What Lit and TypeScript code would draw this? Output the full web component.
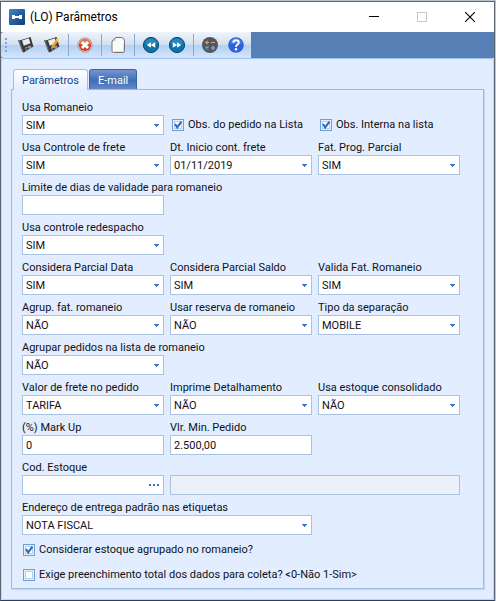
import { LitElement, html, css, svg, nothing, TemplateResult } from "lit";
import { customElement, state } from "lit/decorators.js";

type Field = {
  kind: "select" | "date" | "text" | "lookup" | "readonly" | "check";
  id: string;
  label?: string;
  value?: string;
  checked?: boolean;
  span?: number;
};

const ROWS: Field[][] = [
  [
    { kind: "select", id: "romaneio", label: "Usa Romaneio", value: "SIM" },
    { kind: "check", id: "obs-lista", label: "Obs. do pedido na Lista", checked: true },
    { kind: "check", id: "obs-interna", label: "Obs. Interna na lista", checked: true },
  ],
  [
    { kind: "select", id: "frete", label: "Usa Controle de frete", value: "SIM" },
    { kind: "date", id: "inicio", label: "Dt. Inicio cont. frete", value: "01/11/2019" },
    { kind: "select", id: "prog", label: "Fat. Prog. Parcial", value: "SIM" },
  ],
  [{ kind: "text", id: "limite", label: "Limite de dias de validade para romaneio", value: "" }],
  [{ kind: "select", id: "redespacho", label: "Usa controle redespacho", value: "SIM" }],
  [
    { kind: "select", id: "parcial-data", label: "Considera Parcial Data", value: "SIM" },
    { kind: "select", id: "parcial-saldo", label: "Considera Parcial Saldo", value: "SIM" },
    { kind: "select", id: "valida", label: "Valida Fat. Romaneio", value: "SIM" },
  ],
  [
    { kind: "select", id: "agrup", label: "Agrup. fat. romaneio", value: "NÃO" },
    { kind: "select", id: "reserva", label: "Usar reserva de romaneio", value: "NÃO" },
    { kind: "select", id: "separacao", label: "Tipo da separação", value: "MOBILE" },
  ],
  [{ kind: "select", id: "agrupar", label: "Agrupar pedidos na lista de romaneio", value: "NÃO" }],
  [
    { kind: "select", id: "valor", label: "Valor de frete no pedido", value: "TARIFA" },
    { kind: "select", id: "imprime", label: "Imprime Detalhamento", value: "NÃO" },
    { kind: "select", id: "consolidado", label: "Usa estoque consolidado", value: "NÃO" },
  ],
  [
    { kind: "text", id: "markup", label: "(%) Mark Up", value: "0" },
    { kind: "text", id: "minimo", label: "Vlr. Min. Pedido", value: "2.500,00" },
  ],
  [
    { kind: "lookup", id: "estoque", label: "Cod. Estoque", value: "" },
    { kind: "readonly", id: "estoque-nome", value: "", span: 2 },
  ],
  [{ kind: "select", id: "endereco", label: "Endereço de entrega padrão nas etiquetas", value: "NOTA FISCAL", span: 2 }],
];

const floppy = svg`
  <path d="M1 4 L2.6 4.6 L13.6 1 L16.4 10.6 L6.6 16.4 L5.4 15.6 Z" fill="#3a3a3c"/>
  <path d="M1 4 L2.6 4.6 L6.6 16.4 L5.4 15.6 Z" fill="#6f6f72"/>
  <path d="M5 4.4 L11.8 2.2 L13.4 7.2 L6.8 9.8 Z" fill="#e9ebed"/>
  <path d="M8 11.8 L13.6 9.2 L14.6 11.4 L9.2 14.4 Z" fill="#929496"/>
  <path d="M9.2 12.2 L10.8 11.5 L11.7 13 L10.2 13.8 Z" fill="#2b2b2d"/>`;

const ICONS: Record<string, TemplateResult> = {
  save: svg`${floppy}`,
  saveEdit: svg`${floppy}
    <path d="M13.8 2.6 L16 4 L10.6 11.4 L8.4 12.8 L8.6 10 Z" fill="#f2a024"/>
    <path d="M13.8 2.6 L16 4 L15.2 5.2 L13 3.8 Z" fill="#f9cf86"/>`,
  cancel: svg`
    <circle cx="9" cy="9" r="7.2" fill="#d6cfce" stroke="#9b9496" stroke-width=".8"/>
    <circle cx="9" cy="9" r="6.1" fill="#d83a1c"/>
    <path d="M3.2 8 A5.9 5.9 0 0 1 14.8 8 Q9 10 3.2 8" fill="#f08a6c" opacity=".7"/>
    <path d="M5.9 6 L12.1 12 M12.1 6 L5.9 12" stroke="#fff" stroke-width="3"/>`,
  page: svg`
    <path d="M6.5 1.5 H12 Q15.5 1.5 15.5 5 V15 Q15.5 16.5 14 16.5 H4.5 Q3 16.5 3 15 V5 Z" fill="#fbfbfb" stroke="#76787a"/>
    <path d="M3.5 5.5 Q6.5 5.5 6.8 2" fill="none" stroke="#b3b5b7"/>
    <path d="M5 15.5 H14.5 V8" fill="none" stroke="#d9dbdd"/>`,
  prev: svg`
    <circle cx="9" cy="9" r="7.6" fill="#0b74ac" stroke="#0b4566"/>
    <path d="M2.8 7.5 A6.4 6.4 0 0 1 15.2 7.5 Q9 9.5 2.8 7.5" fill="#3a9acb" opacity=".6"/>
    <path d="M9 6.2 V11.8 L4.8 9 Z M13.2 6.2 V11.8 L8.8 9 Z" fill="#fff"/>`,
  next: svg`
    <circle cx="9" cy="9" r="7.6" fill="#0b74ac" stroke="#0b4566"/>
    <path d="M2.8 7.5 A6.4 6.4 0 0 1 15.2 7.5 Q9 9.5 2.8 7.5" fill="#3a9acb" opacity=".6"/>
    <path d="M4.8 6.2 V11.8 L9.2 9 Z M9 6.2 V11.8 L13.2 9 Z" fill="#fff"/>`,
  calc: svg`
    <circle cx="9" cy="9" r="8" fill="#4c5768"/>
    <path d="M4 6.5 H8 M6 4.5 V8.5 M10 6.5 H14" stroke="#f0a05a" stroke-width="1.2"/>
    <path d="M4.5 10.5 L7.5 13.5 M7.5 10.5 L4.5 13.5" stroke="#4fc29a" stroke-width="1.2"/>
    <path d="M10 12 H14 M12 9.8 V14.2" stroke="#a9b1bd" stroke-width="1.2"/>`,
  help: svg`
    <circle cx="9" cy="9" r="7.8" fill="#2b63d9"/>
    <path d="M2.4 7 A7 7 0 0 1 15.6 7 Q9 9 2.4 7" fill="#5c8df0" opacity=".6"/>
    <path d="M6.2 6.8 Q6.2 4.2 9 4.2 Q11.8 4.2 11.8 6.5 Q11.8 7.8 10.3 8.7 Q9 9.5 9 11" fill="none" stroke="#fff" stroke-width="1.9"/>
    <circle cx="9" cy="13.3" r="1.2" fill="#fff"/>`,
};

const TOOLS: [string, string][][] = [
  [["save", "Salvar"], ["saveEdit", "Salvar e editar"]],
  [["cancel", "Cancelar"]],
  [["page", "Novo"]],
  [["prev", "Anterior"], ["next", "Próximo"]],
  [["calc", "Calculadora"], ["help", "Ajuda"]],
];

@customElement("app-root")
export class AppRoot extends LitElement {
  @state() private tab = "Parâmetros";

  static styles = css`
    :host {
      display: block;
      box-sizing: border-box;
      min-height: 100vh;
      padding: 1px 1px 0 0;
      background: #b9c6cf;
      font: 11px/16px Tahoma, Roboto, sans-serif;
      color: #101018;
    }
    * { box-sizing: border-box; }
    button, input, select { font: inherit; color: inherit; margin: 0; }
    button { border: 0; padding: 0; background: none; }
    .window {
      display: flex;
      flex-direction: column;
      min-height: calc(100vh - 1px);
      border: 1px solid #5c6670;
      border-bottom-color: #2c405c;
      background: #e2eeff;
    }
    .title {
      display: flex;
      align-items: center;
      height: 30px;
      padding-left: 8px;
      background: #fff;
    }
    .title h1 {
      flex: 1;
      margin: 0 0 0 5px;
      font: 12px/16px "Segoe UI", Roboto, sans-serif;
      color: #000;
    }
    .caption { width: 48px; height: 30px; display: grid; place-items: center; }
    .bar { display: flex; height: 26px; background: #567fb5; }
    .tools {
      display: flex;
      align-items: center;
      width: 250px;
      padding-left: 4px;
      border-radius: 3px 0 0 3px;
      background: linear-gradient(#f0f4fa, #d3e0f0 48%, #b4d0f3 52%, #d4e6fd);
    }
    .grip { width: 8px; height: 18px; }
    .tool { width: 26px; height: 26px; display: grid; place-items: center; }
    .sep { width: 1px; height: 22px; margin: 0 3px; background: #85abdb; }
    .body {
      flex: 1;
      padding: 10px 9px;
      border: 1px solid #bdd5f7;
      border-top-color: #9cc0ef;
      border-radius: 3px;
      background: #e2eeff;
    }
    .tabs { display: flex; gap: 1px; padding: 0 2px; }
    .tab {
      height: 20px;
      padding: 2px 8px 0;
      border: 1px solid #3d64a5;
      border-bottom: 0;
      border-radius: 3px 3px 0 0;
      background: linear-gradient(#7596cf, #416eb6 55%, #6489c6);
      color: #fff;
    }
    .tab.on {
      position: relative;
      height: 21px;
      margin-bottom: -1px;
      border-color: #9dbfea;
      background: linear-gradient(#fff, #e2eeff);
      color: #15428b;
    }
    .panel {
      padding: 9px 23px 3px 10px;
      border: 1px solid #9dbbe6;
      box-shadow: 1px 1px 1px #c5d8f3;
    }
    form { display: flex; flex-direction: column; gap: 4px; }
    .row { display: grid; grid-template-columns: repeat(3, minmax(0, 1fr)); column-gap: 6px; }
    .field { display: flex; flex-direction: column; justify-content: flex-end; min-height: 36px; }
    .wide { grid-column: span 2; }
    .field > label { white-space: nowrap; line-height: 14px; }
    .box { position: relative; display: flex; }
    .control {
      width: 100%;
      height: 20px;
      padding: 0 16px 0 3px;
      border: 1px solid #a9c2e2;
      border-radius: 0;
      background: #fff;
      appearance: none;
      outline: none;
    }
    select.control { padding-top: 2px; }
    .control:disabled { background: #ecf0f9; }
    .drop { position: absolute; top: 1px; right: 1px; width: 14px; height: 18px; display: grid; place-items: center; pointer-events: none; }
    .more { width: 18px; }
    .check { display: flex; align-items: center; gap: 4px; height: 20px; padding-left: 2px; }
    .tick { display: grid; }
    .tick > * { grid-area: 1 / 1; }
    .tick input {
      appearance: none;
      width: 12px;
      height: 12px;
      border: 1px solid #6f9fd8;
      background: #fff;
      box-shadow: inset 0 0 0 1px #e6effa, inset 0 0 0 2px #b4cdeb;
    }
    .tick svg { pointer-events: none; }
    .tick input:not(:checked) + svg { visibility: hidden; }
    .options { display: flex; flex-direction: column; gap: 5px; padding: 1px 0 0 0; }
    .options .check { padding-left: 1px; }
  `;

  private renderCheck(f: Field) {
    return html`<div class="check">
      <span class="tick">
        <input type="checkbox" id=${f.id} ?checked=${f.checked} />
        <svg width="12" height="12" viewBox="0 0 12 12">
          <path d="M3 5 L5.2 8.4 L9.4 2.6" fill="none" stroke="#2d6bb8" stroke-width="2" />
        </svg>
      </span>
      <label for=${f.id}>${f.label}</label>
    </div>`;
  }

  private renderControl(f: Field) {
    const arrow = html`<svg width="5" height="3" viewBox="0 0 5 3" shape-rendering="crispEdges"><path d="M0 0H5V1H4V2H3V3H2V2H1V1H0Z" fill="#3f73bd"/></svg>`;
    if (f.kind === "select") {
      return html`<select class="control" id=${f.id}><option>${f.value}</option></select>
        <span class="drop">${arrow}</span>`;
    }
    if (f.kind === "readonly") {
      return html`<input class="control" id=${f.id} aria-label="Estoque" disabled />`;
    }
    return html`<input class="control" type="text" id=${f.id} .value=${f.value ?? ""} />
      ${f.kind === "date" ? html`<span class="drop">${arrow}</span>` : nothing}
      ${f.kind === "lookup"
        ? html`<button class="drop more" type="button" aria-label="Pesquisar estoque">
            <svg width="10" height="2" shape-rendering="crispEdges"><path d="M0 0h2v2h-2zM4 0h2v2h-2zM8 0h2v2h-2z" fill="#3f73bd" /></svg>
          </button>`
        : nothing}`;
  }

  private renderField(f: Field) {
    return html`<div class="field ${f.span === 2 ? "wide" : ""}">
      ${f.kind === "check"
        ? this.renderCheck(f)
        : html`${f.label ? html`<label for=${f.id}>${f.label}</label>` : nothing}
            <div class="box">${this.renderControl(f)}</div>`}
    </div>`;
  }

  render() {
    return html`<main class="window">
      <header class="title">
        <svg width="16" height="16" viewBox="0 0 16 16">
          <defs><linearGradient id="g" x2="1" y2="1"><stop stop-color="#3f86c8" /><stop offset="1" stop-color="#123c78" /></linearGradient></defs>
          <rect width="16" height="16" rx="1" fill="url(#g)" />
          <path d="M3 6H6V7H10V6H13V10H10V9H6V10H3Z" fill="#fff" />
        </svg>
        <h1>(LO) Parâmetros</h1>
        <button class="caption" aria-label="Minimizar"><svg width="10" height="10" shape-rendering="crispEdges"><path d="M0 4h10v1h-10z" /></svg></button>
        <button class="caption" aria-label="Maximizar" disabled><svg width="10" height="10"><rect x=".5" y=".5" width="9" height="9" fill="none" stroke="#c8c8c8" /></svg></button>
        <button class="caption" aria-label="Fechar"><svg width="10" height="10"><path d="M0 0L10 10M10 0L0 10" stroke="#000" stroke-width="1.1" /></svg></button>
      </header>
      <div class="bar">
        <div class="tools" role="toolbar">
          <svg class="grip" viewBox="0 0 8 18" shape-rendering="crispEdges"><path d="M0 2h2v2h-2zM0 6h2v2h-2zM0 10h2v2h-2zM0 14h2v2h-2z" fill="#7fa6d8" /></svg>
          ${TOOLS.map((group, i) => html`${i ? html`<span class="sep"></span>` : nothing}${group.map(
            ([icon, name]) => html`<button class="tool" title=${name} aria-label=${name}>
              <svg width="18" height="18" viewBox="0 0 18 18">${ICONS[icon]}</svg>
            </button>`
          )}`)}
        </div>
      </div>
      <section class="body">
        <div class="tabs" role="tablist">
          ${["Parâmetros", "E-mail"].map(
            (t) => html`<button role="tab" class="tab ${this.tab === t ? "on" : ""}" aria-selected=${this.tab === t} @click=${() => (this.tab = t)}>${t}</button>`
          )}
        </div>
        <div class="panel" role="tabpanel">
          <form>
            ${ROWS.map((row) => html`<div class="row">${row.map((f) => this.renderField(f))}</div>`)}
            <div class="options">
              ${this.renderCheck({ kind: "check", id: "considerar", label: "Considerar estoque agrupado no romaneio?", checked: true })}
              ${this.renderCheck({ kind: "check", id: "exige", label: "Exige preenchimento total dos dados para coleta? <0-Não 1-Sim>" })}
            </div>
          </form>
        </div>
      </section>
    </main>`;
  }
}
